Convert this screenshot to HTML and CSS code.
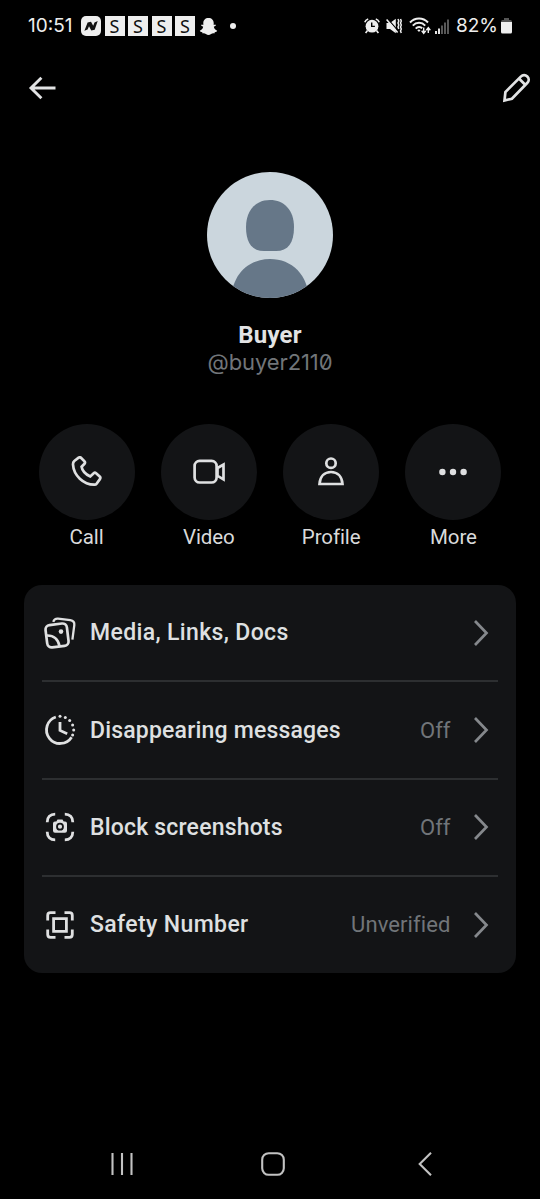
FILE: index.html
```html
<!DOCTYPE html>
<html lang="en">
<head>
<meta charset="utf-8">
<meta name="viewport" content="width=device-width, initial-scale=1">
<title>Buyer</title>
<link rel="stylesheet" href="styles.css">
</head>
<body>
<div class="screen">
  <header class="status">
    <span class="clock">10:51</span>
    <div class="notices">
      <svg class="news" width="20" height="20" viewBox="0 0 20 20"><rect width="20" height="20" rx="5" fill="#eee"/><path d="M3.400 14.800 6.600 6.500l3.400-.8 2.200 4 1.300-3.200 3.200-1.500-3 8.700-3.400.8-2.300-4.200-1.400 3.200z" fill="#111"/></svg>
      <span class="tile">S</span><span class="tile">S</span><span class="tile">S</span><span class="tile">S</span>
      <svg class="ghost" width="19" height="19" viewBox="0 0 19 19"><path d="M9.500 1C6.300 1 4.300 3.100 4.300 6v2L2.700 7.600 2 8.500l2.200 1.300C3.700 12 2.500 13 .8 13.800c.1 1 1.300 1.200 2.400 1.400l.5 1.200c1.200-.2 2.300-.1 3.200.6 1.700 1.300 3.500 1.300 5.200 0 .9-.7 2-.8 3.200-.6l.5-1.200c1.100-.2 2.300-.4 2.400-1.400-1.700-.8-2.900-1.800-3.400-4L17 8.500l-.7-.9-1.600.4V6c0-2.900-2-5-5.200-5z" fill="#eee"/></svg>
      <i class="dot"></i>
    </div>
    <div class="system">
      <svg width="16" height="16" viewBox="0 0 16 16"><circle cx="8" cy="8.200" r="6.400" fill="#eee"/><path d="M.8 4.300C1.300 2.600 2.500 1.400 4.200.9M15.200 4.300C14.700 2.600 13.500 1.400 11.800.9M3.500 12.500 1.600 15M12.500 12.500l1.900 2.500" stroke="#eee" stroke-width="1.600" fill="none"/><path d="M7.700 4.500v3.900h3.200" stroke="#000" stroke-width="1.400" fill="none"/></svg>
      <svg class="mute" width="16" height="16" viewBox="0 0 16 16"><path d="M.5 5H4L9.800.8v14.400L4 11H.5z" fill="#eee"/><path d="m1.600.6 10.800 12.800" stroke="#000" stroke-width="1.300"/><path d="m.6 1.400 11 13" stroke="#eee" stroke-width="1.600"/><path d="m12 1 .8 2L12 5l.8 2-.8 2 .8 2M14.500 1l.8 2-.8 2 .8 2-.8 2 .8 2-.8 2 .8 2" stroke="#eee" stroke-width="1.500" fill="none"/></svg>
      <svg class="wifi" width="22" height="18" viewBox="0 0 22 18"><path d="M1 5.500c5-5.300 13-5.300 18 0M3.800 8.600c3.500-3.700 9-3.700 12.400 0M6.700 11.600c2-2 4.800-2 6.500-.3" stroke="#eee" stroke-width="2" fill="none"/><path d="m8.300 13.200 1.700 1.900 1.500-1.900c-1-.9-2.200-.9-3.200 0z" fill="#eee"/><path d="M14.700 10.500V16m-2-2.200 2 2.500 2-2.500M19.300 16v-5m-2 2.200 2-2.500 2 2.500" stroke="#eee" stroke-width="1.400" fill="none"/></svg>
      <svg class="bars" width="14" height="15" viewBox="0 0 14 15"><path d="M1 12v3M4 9.500V15" stroke="#eee" stroke-width="1.900"/><path d="M7 6.500V15M10 3.500V15M13 .5V15" stroke="#5c5c5c" stroke-width="1.900"/></svg>
      <span class="percent">82%</span>
      <svg class="battery" width="11" height="16" viewBox="0 0 11 16"><path d="M3 0h5v2h1.500Q11 2 11 4H0q0-2 1.500-2H3z" fill="#555"/><path d="M0 4h11v10q0 1.500-1.500 1.500h-8Q0 15.500 0 14z" fill="#eee"/></svg>
    </div>
  </header>

  <nav class="toolbar">
    <svg width="28" height="24" viewBox="0 0 28 24"><path d="M13.400 1.800 3 12l10.400 10.200M3 12h24.500" fill="none" stroke="#e2e3e4" stroke-width="2.900"/></svg>
    <svg width="30" height="30" viewBox="0 0 30 30"><path d="M2.500 27.500 3.400 19 18.800 3.600c2-2 4.600-2 6.500-.1s1.900 4.500-.1 6.500L9.900 25.800zM17.200 5.700l6 6" fill="none" stroke="#e2e3e4" stroke-width="2.700"/></svg>
  </nav>

  <section class="identity">
    <svg class="avatar" width="126" height="126" viewBox="0 0 126 126"><defs><clipPath id="round"><circle cx="63" cy="63" r="63"/></clipPath><filter id="soft"><feGaussianBlur stdDeviation=".7"/></filter></defs><g clip-path="url(#round)"><rect width="126" height="126" fill="#cbd6dd"/><g fill="#667788" filter="url(#soft)"><path d="M63 28c14 0 24 10 24 27 0 16-6 24-18 24H57c-12 0-18-8-18-24 0-17 10-27 24-27z"/><path d="M24 130c0-27 17-43 39-43s39 16 39 43z"/></g></g></svg>
    <h1 class="name">Buyer</h1>
    <p class="handle">@buyer2110</p>
  </section>

  <section class="actions">
    <div class="action"><span class="disc"><svg width="32" height="32" viewBox="0 0 32 32"><path d="M3.300 5 7.600 1.700Q9 .8 10.200 2l3.300 3.400q1 1.200 0 2.400l-2.900 2.900c.6 3.800 4.400 7.800 8.700 9.700l3.400-3.200q1.200-1 2.400 0l3.600 3.300q1.200 1.200.2 2.600l-3.300 4.600q-.8 1.100-2.400 1C12.500 28.500 2.600 19.500 2 8.500Q1.900 6.200 3.300 5z" fill="none" stroke="#dfe0e1" stroke-width="2.700"/></svg></span><span class="caption">Call</span></div>
    <div class="action"><span class="disc"><svg width="34" height="32" viewBox="0 0 34 32"><rect x="2.600" y="4.900" width="22" height="21.600" rx="5" fill="none" stroke="#dfe0e1" stroke-width="2.700"/><path d="m25.500 12 6-3.500v14.800l-6-3.500z" fill="none" stroke="#dfe0e1" stroke-width="2.700"/></svg></span><span class="caption">Video</span></div>
    <div class="action"><span class="disc"><svg width="32" height="32" viewBox="0 0 32 32"><circle cx="16" cy="7.200" r="4.700" fill="none" stroke="#dfe0e1" stroke-width="2.700"/><path d="M4.500 28C5 20.500 9.500 16 16 16s11 4.500 11.500 12z" fill="none" stroke="#dfe0e1" stroke-width="2.700"/></svg></span><span class="caption">Profile</span></div>
    <div class="action"><span class="disc"><svg width="32" height="32" viewBox="0 0 32 32" fill="#dfe0e1"><circle cx="5.400" cy="16" r="3.200"/><circle cx="16" cy="16" r="3.200"/><circle cx="26.600" cy="16" r="3.200"/></svg></span><span class="caption">More</span></div>
  </section>

  <section class="card">
    <div class="row">
      <svg class="icon" width="34" height="34" viewBox="0 0 34 34" fill="none" stroke="#dfe0e1" stroke-width="2.700"><rect x="3.300" y="8.200" width="21.500" height="22.500" rx="4.500" transform="rotate(-7 14 19.500)"/><path d="M10.200 5.800Q11.500 2.400 15 2.700l12.300 1.400q4.500.6 4 5l-1.900 14.500" stroke-width="2.300"/><path d="M3.500 19.500c7.500-.3 11.500 3.500 13 10.500"/><circle cx="18" cy="15.600" r="2.300" fill="#dfe0e1" stroke="none"/></svg>
      <span class="label media">Media, Links, Docs</span>
      <svg class="chevron" width="16" height="28" viewBox="0 0 16 28"><path d="m2 2 11.500 12L2 26"/></svg>
    </div>
    <hr class="rule">
    <div class="row">
      <svg class="icon" width="34" height="34" viewBox="0 0 34 34" fill="none" stroke="#dfe0e1" stroke-width="2.800"><path d="M12.800 4A13.600 13.600 0 1 0 28.600 24.200M17 9v8.400l7.200 3.300"/><g fill="#dfe0e1" stroke="none"><circle cx="17" cy="3.300" r="1.500"/><circle cx="22.300" cy="4.400" r="1.500"/><circle cx="26.700" cy="7.400" r="1.500"/><circle cx="29.600" cy="11.900" r="1.500"/><circle cx="30.700" cy="17" r="1.500"/><circle cx="29.600" cy="22" r="1.500"/></g></svg>
      <span class="label vanish">Disappearing messages</span>
      <span class="value">Off</span>
      <svg class="chevron" width="16" height="28" viewBox="0 0 16 28"><path d="m2 2 11.500 12L2 26"/></svg>
    </div>
    <hr class="rule">
    <div class="row">
      <svg class="icon" width="34" height="34" viewBox="0 0 34 34" fill="none" stroke="#dfe0e1" stroke-width="2.800"><path d="M4.200 12.200c0-5 3-8 8-8M21.800 4.200c5 0 8 3 8 8M29.800 21.800c0 5-3 8-8 8M12.200 29.800c-5 0-8-3-8-8"/><path d="M12 11.500h1.300l1.200-2h5l1.200 2H22q2 0 2 2v7.300q0 2-2 2H12q-2 0-2-2v-7.300q0-2 2-2z" fill="#dfe0e1" stroke="none"/><circle cx="17" cy="16.700" r="3" stroke="#131416" stroke-width="1.800"/></svg>
      <span class="label block">Block screenshots</span>
      <span class="value">Off</span>
      <svg class="chevron" width="16" height="28" viewBox="0 0 16 28"><path d="m2 2 11.500 12L2 26"/></svg>
    </div>
    <hr class="rule">
    <div class="row">
      <svg class="icon" width="34" height="34" viewBox="0 0 34 34" fill="none" stroke="#dfe0e1" stroke-width="2.800"><path d="M4.700 12.500v-5q0-2.800 2.800-2.800h5M21.500 4.700h5q2.800 0 2.800 2.800v5M29.300 21.500v5q0 2.800-2.800 2.800h-5M12.500 29.300h-5q-2.800 0-2.800-2.800v-5M10.600 10.600h12.800v12.800H10.600z"/></svg>
      <span class="label safety">Safety Number</span>
      <span class="value unverified">Unverified</span>
      <svg class="chevron" width="16" height="28" viewBox="0 0 16 28"><path d="m2 2 11.500 12L2 26"/></svg>
    </div>
  </section>

  <footer class="navbar">
    <svg width="24" height="24" viewBox="0 0 24 24"><path d="M2.500 1v22M12 1v22M21.500 1v22"/></svg>
    <svg class="home" width="24" height="24" viewBox="0 0 24 24"><rect x="1.200" y="1.200" width="21.600" height="21.600" rx="6.500"/></svg>
    <svg class="back" width="16" height="24" viewBox="0 0 16 24"><path d="M14 .8 2.700 12 14 23.200"/></svg>
  </footer>
</div>
</body>
</html>
```
FILE: styles.css
```css
* { box-sizing: border-box; }
body { margin: 0; background: #000; font-family: Roboto, "Liberation Sans", sans-serif; color: #e2e3e4; }
svg { display: block; flex: none; }
.screen { width: 540px; height: 1199px; display: flex; flex-direction: column; overflow: hidden; }

.status { height: 52px; display: flex; align-items: center; padding: 0 28px; font-family: Inter, sans-serif; font-size: 19px; line-height: 24px; color: #eee; }
.clock { width: 53px; letter-spacing: 0; white-space: nowrap; }
.notices { display: flex; align-items: center; }
.news { margin-right: 3.500px; }
.tile { width: 20px; height: 20px; margin-right: 3.500px; background: #eee; color: #111; font: 400 18px/20px "Noto Sans", sans-serif; text-align: center; }
.dot { width: 6px; height: 6px; border-radius: 50%; background: #eee; margin-left: 12.500px; }
.system { margin-left: auto; display: flex; align-items: center; white-space: nowrap; }
.mute { margin-left: 6px; }
.wifi { margin-left: 7px; }
.bars { margin-left: 4px; }
.percent { margin-left: 7px; width: 42px; letter-spacing: -0.1px; }
.battery { margin-left: 3px; }

.toolbar { height: 72px; padding: 0 8.500px 0 28px; display: flex; justify-content: space-between; align-items: center; }

.identity { height: 300px; padding-top: 48px; display: flex; flex-direction: column; align-items: center; }
.name { margin: 22px 0 0; font-size: 24px; line-height: 30px; font-weight: 700; letter-spacing: 0.2px; }
.handle { margin: -3px 0 0; font-family: Inter, sans-serif; font-size: 22px; line-height: 30px; color: #717579; font-feature-settings: "zero"; letter-spacing: -0.1px; }

.actions { height: 161px; padding: 0 38px; display: flex; justify-content: space-between; }
.action { width: 97px; display: flex; flex-direction: column; align-items: center; }
.disc { width: 96px; height: 96px; border-radius: 50%; background: #131416; display: flex; align-items: center; justify-content: center; }
.caption { margin-top: 3px; font-size: 20.500px; line-height: 28px; letter-spacing: -0.1px; color: #d9dadb; }

.card { margin: 0 24px; height: 387.500px; border-radius: 18px; background: #131416; padding: 0 18px; }
.row { height: 95.400px; display: flex; align-items: center; padding-right: 9.500px; }
.icon { margin: 0 13px 0 1px; }
.label { font-size: 23px; line-height: 30px; font-weight: 500; color: #dfe0e1; white-space: nowrap; padding-top: 1px; }
.media { letter-spacing: 0.360px; }
.vanish { letter-spacing: 0.190px; }
.block { letter-spacing: 0.190px; }
.safety { letter-spacing: 0.380px; }
.value { margin-left: auto; font-size: 22px; line-height: 30px; color: #717579; padding-top: 1px; }
.unverified { letter-spacing: 0.100px; }
.chevron { margin-left: 22px; fill: none; stroke: #85888c; stroke-width: 2.700; }
.media + .chevron { margin-left: auto; }
.rule { height: 2px; margin: 0; border: 0; background: #2d2f31; }

.navbar { margin-top: auto; height: 70px; display: flex; padding: 23px 0 0 110px; fill: none; stroke: #c2c2c2; stroke-width: 2.100; }
.home { margin-left: 127px; }
.back { margin-left: 132px; }
```
